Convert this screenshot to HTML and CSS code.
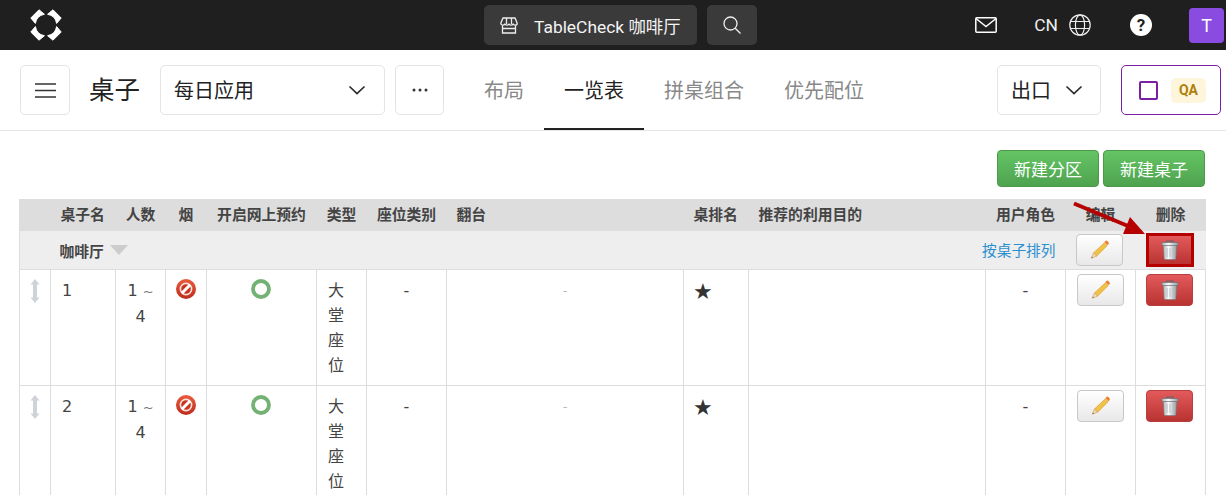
FILE: index.html
```html
<!DOCTYPE html>
<html lang="zh-CN">
<head>
  <meta charset="UTF-8">
  <title>桌子</title>
  <link rel="stylesheet" href="styles.css">
</head>
<body>
  <svg class="sprites" width="0" height="0">
    <defs>
      <linearGradient id="can" x1="0" x2="1" y1="0" y2="0">
        <stop offset="0" stop-color="#a9afb4"/>
        <stop offset="0.4" stop-color="#fbfcfc"/>
        <stop offset="1" stop-color="#8f979c"/>
      </linearGradient>
      <linearGradient id="noentry" x1="0" x2="0" y1="0" y2="1">
        <stop offset="0" stop-color="#ea5a3e"/>
        <stop offset="1" stop-color="#bb2e1c"/>
      </linearGradient>
      <symbol id="trash" viewBox="0 0 18 20">
        <path d="M6 2.500V1h6v1.500" fill="none" stroke="#5d666c" stroke-width="1.200"/>
        <rect x="0.800" y="2.500" width="16.400" height="3" rx="1" fill="url(#can)" stroke="#5d666c" stroke-width="0.600"/>
        <path d="M2.200 5.500h13.600l-0.900 13.200a1 1 0 0 1-1 .9H4.100a1 1 0 0 1-1-.9z" fill="url(#can)" stroke="#6a7278" stroke-width="0.500"/>
        <path d="M6 8v9M9 8v9M12 8v9" stroke="#b4babe" stroke-width="0.900"/>
      </symbol>
      <symbol id="pencil" viewBox="0 0 20 20">
        <path d="M14.500 3l3 3L6.500 17 3 13.800z" fill="#f0c248" stroke="#d69a2a" stroke-width="0.600"/>
        <path d="M15.500 1.200a1.700 1.700 0 0 1 2.400 0l.9.9a1.700 1.700 0 0 1 0 2.400l-1 1-3.300-3.300z" fill="#ef7f2c"/>
        <path d="M3 13.800L6.500 17 .8 19.200z" fill="#f3d9b4" stroke="#c9985f" stroke-width="0.600"/>
        <path d="M1.500 17.300L.8 19.200l1.900-.7z" fill="#8a6a48"/>
      </symbol>
      <symbol id="noway" viewBox="0 0 20 20">
        <circle cx="10" cy="10" r="10" fill="url(#noentry)"/>
        <circle cx="10" cy="10" r="5.600" fill="#c8341f" stroke="#fbe3dc" stroke-width="1.600"/>
        <path d="M5.800 14.200l8.400-8.400" stroke="#fff" stroke-width="3"/>
      </symbol>
      <symbol id="ring" viewBox="0 0 20 20">
        <circle cx="10" cy="10" r="8" fill="none" stroke="#74b174" stroke-width="3.800"/>
      </symbol>
      <symbol id="drag" viewBox="0 0 10 24">
        <path d="M5 0l4.500 5.500H7V18.500h2.500L5 24 .5 18.500H3V5.500H.5z" fill="#cfd3d8"/>
      </symbol>
      <symbol id="chevron" viewBox="0 0 18 10">
        <path d="M1.500 1.500L9 8.500l7.500-7" fill="none" stroke="#2a2a2a" stroke-width="1.700"/>
      </symbol>
    </defs>
  </svg>

  <header class="topbar">
    <svg class="logo" width="32" height="32" viewBox="0 0 32 32">
      <g fill="#fff" stroke="#fff" stroke-width="1" stroke-linejoin="round">
        <path id="petal" d="M9 .8L.8 9l4.600 5.400A11 11 0 0 1 14.400 5.300z"/>
        <use href="#petal" transform="matrix(-1 0 0 1 32 0)"/>
        <use href="#petal" transform="matrix(1 0 0 -1 0 32)"/>
        <use href="#petal" transform="matrix(-1 0 0 -1 32 32)"/>
      </g>
    </svg>
    <div class="top-center">
      <button class="dark-btn venue-btn">
        <svg width="18" height="17" viewBox="0 0 18 17" fill="none" stroke="#eee" stroke-width="1.300">
          <path d="M3 1h12l2.200 5.200a2 2 0 0 1-2 2 2.600 2.600 0 0 1-2.100-1.100 2.700 2.700 0 0 1-4.100 0 2.700 2.700 0 0 1-4.100 0A2.600 2.600 0 0 1 2.800 8.200a2 2 0 0 1-2-2z"/>
          <path d="M2.500 8.500V16h13V8.500M2.500 11.500h13M6.500 1v6M11.500 1v6"/>
        </svg>
        <span>TableCheck 咖啡厅</span>
      </button>
      <button class="dark-btn search-btn">
        <svg width="18" height="18" viewBox="0 0 18 18" fill="none" stroke="#eee" stroke-width="1.300">
          <circle cx="7.500" cy="7.500" r="6.500"/>
          <path d="M12.200 12.200L17.500 17.500"/>
        </svg>
      </button>
    </div>
    <div class="top-right">
      <svg class="mail" width="22" height="16" viewBox="0 0 22 16" fill="none" stroke="#fff" stroke-width="1.500">
        <rect x="0.800" y="0.800" width="20.400" height="14.400" rx="1"/>
        <path d="M1 1.500l10 8 10-8"/>
      </svg>
      <span class="lang">CN</span>
      <svg class="globe" width="22" height="22" viewBox="0 0 22 22" fill="none" stroke="#eee" stroke-width="1.200">
        <circle cx="11" cy="11" r="10.200"/>
        <ellipse cx="11" cy="11" rx="4.600" ry="10.200"/>
        <path d="M1.500 7.500h19M1.500 14.500h19"/>
      </svg>
      <span class="help">?</span>
      <span class="avatar">T</span>
    </div>
  </header>

  <nav class="subbar">
    <button class="box-btn menu-btn">
      <svg width="21" height="15" viewBox="0 0 21 15" stroke="#333" stroke-width="1.500"><path d="M0 1h21M0 7.500h21M0 14h21"/></svg>
    </button>
    <h1 class="page-title">桌子</h1>
    <button class="box-btn select-btn">
      <span>每日应用</span>
      <svg width="18" height="10"><use href="#chevron"/></svg>
    </button>
    <button class="box-btn more-btn">
      <svg width="16" height="4" viewBox="0 0 16 4" fill="#333"><circle cx="2" cy="2" r="1.500"/><circle cx="8" cy="2" r="1.500"/><circle cx="14" cy="2" r="1.500"/></svg>
    </button>
    <div class="tabs">
      <a class="tab">布局</a>
      <a class="tab active">一览表</a>
      <a class="tab">拼桌组合</a>
      <a class="tab">优先配位</a>
    </div>
    <button class="box-btn export-btn">
      <span>出口</span>
      <svg width="18" height="10"><use href="#chevron"/></svg>
    </button>
    <div class="qa-box">
      <span class="qa-check"></span>
      <span class="qa-badge">QA</span>
    </div>
  </nav>

  <main class="content">
    <div class="actions">
      <button class="green-btn">新建分区</button>
      <button class="green-btn">新建桌子</button>
    </div>

    <table class="tables">
      <colgroup>
        <col class="c-drag"><col class="c-name"><col class="c-pax"><col class="c-smoke">
        <col class="c-web"><col class="c-type"><col class="c-seat"><col class="c-turn">
        <col class="c-rank"><col class="c-purpose"><col class="c-role"><col class="c-edit"><col class="c-del">
      </colgroup>
      <thead>
        <tr class="head-row">
          <th></th>
          <th class="left">桌子名</th>
          <th>人数</th>
          <th>烟</th>
          <th>开启网上预约</th>
          <th>类型</th>
          <th>座位类别</th>
          <th class="left">翻台</th>
          <th class="left">桌排名</th>
          <th class="left">推荐的利用目的</th>
          <th>用户角色</th>
          <th>编辑</th>
          <th>删除</th>
        </tr>
        <tr class="section-row">
          <th></th>
          <th class="left" colspan="8"><span class="section-name">咖啡厅<i class="caret"></i></span></th>
          <th class="sort-cell" colspan="2"><a class="sort-link">按桌子排列</a></th>
          <th class="btn-cell"><button class="icon-btn edit-btn shifted"><svg width="20" height="19"><use href="#pencil"/></svg></button></th>
          <th class="btn-cell"><button class="icon-btn del-btn marked"><svg width="18" height="20"><use href="#trash"/></svg></button></th>
        </tr>
      </thead>
      <tbody>
        <tr>
          <td class="mid"><svg width="10" height="24"><use href="#drag"/></svg></td>
          <td class="left num">1</td>
          <td class="mid">1 <small>~</small> 4</td>
          <td class="mid icon-cell"><svg width="20" height="20"><use href="#noway"/></svg></td>
          <td class="mid icon-cell ring-cell"><svg width="20" height="20"><use href="#ring"/></svg></td>
          <td class="left num">大堂座位</td>
          <td class="mid dash">-</td>
          <td class="mid dash light">-</td>
          <td class="left star">★</td>
          <td></td>
          <td class="mid dash">-</td>
          <td class="btn-cell"><button class="icon-btn edit-btn"><svg width="20" height="19"><use href="#pencil"/></svg></button></td>
          <td class="btn-cell"><button class="icon-btn del-btn shifted"><svg width="18" height="20"><use href="#trash"/></svg></button></td>
        </tr>
        <tr>
          <td class="mid"><svg width="10" height="24"><use href="#drag"/></svg></td>
          <td class="left num">2</td>
          <td class="mid">1 <small>~</small> 4</td>
          <td class="mid icon-cell"><svg width="20" height="20"><use href="#noway"/></svg></td>
          <td class="mid icon-cell ring-cell"><svg width="20" height="20"><use href="#ring"/></svg></td>
          <td class="left num">大堂座位</td>
          <td class="mid dash">-</td>
          <td class="mid dash light">-</td>
          <td class="left star">★</td>
          <td></td>
          <td class="mid dash">-</td>
          <td class="btn-cell"><button class="icon-btn edit-btn"><svg width="20" height="19"><use href="#pencil"/></svg></button></td>
          <td class="btn-cell"><button class="icon-btn del-btn shifted"><svg width="18" height="20"><use href="#trash"/></svg></button></td>
        </tr>
      </tbody>
    </table>
  </main>

  <!-- annotation pointing at the delete button -->
  <svg class="arrow" width="80" height="40" viewBox="0 0 80 40">
    <path d="M4 3.500L58 26" stroke="#b60000" stroke-width="4"/>
    <path d="M75 34L60 17 53 34z" fill="#b60000"/>
  </svg>
</body>
</html>
```

FILE: styles.css
```css
html, body {
  height: 100%;
  overflow: hidden;
}
body {
  margin: 0;
  background: #fff;
  color: #333;
  font-family: Roboto, "Noto Sans CJK SC", sans-serif;
}
button {
  font-family: inherit;
  cursor: pointer;
}
.sprites {
  position: absolute;
}

/* top bar */
.topbar {
  display: grid;
  grid-template-columns: 484px 273px 1fr;
  align-items: center;
  height: 50px;
  background: #1f1f1f;
}
.logo {
  margin-left: 30px;
}
.top-center {
  display: flex;
  gap: 10px;
}
.dark-btn {
  display: flex;
  align-items: center;
  height: 40px;
  border: none;
  border-radius: 5px;
  background: #3a3a3a;
  color: #f4f4f4;
  font-size: 17.400px;
}
.venue-btn {
  gap: 16px;
  width: 213px;
  padding: 0 0 0 16px;
  white-space: nowrap;
}
.search-btn {
  justify-content: center;
  width: 50px;
  padding: 0;
}
.top-right {
  display: flex;
  align-items: center;
  justify-content: flex-end;
  padding-right: 2px;
  color: #eee;
}
.lang {
  margin-left: 37px;
  font-size: 17.400px;
}
.globe {
  margin-left: 11px;
}
.help {
  width: 22px;
  height: 22px;
  margin-left: 39px;
  border-radius: 50%;
  background: #fff;
  color: #1f1f1f;
  font-size: 17px;
  font-weight: 700;
  line-height: 22px;
  text-align: center;
}
.avatar {
  width: 35px;
  height: 35px;
  margin-left: 37px;
  border-radius: 4px;
  background: #8a4be0;
  color: #fff;
  font-size: 18px;
  line-height: 35px;
  text-align: center;
}

/* second bar */
.subbar {
  display: flex;
  height: 81px;
  padding: 15px 5px 0 20px;
  box-sizing: border-box;
  border-bottom: 1px solid #e6e6e6;
}
.box-btn {
  display: flex;
  align-items: center;
  justify-content: center;
  height: 50px;
  padding: 0;
  border: 1px solid #e4e4e4;
  border-radius: 5px;
  background: #fff;
  color: #222;
  font-size: 20px;
}
.box-btn span {
  margin-bottom: 2px;
}
.menu-btn {
  width: 50px;
}
.page-title {
  width: 50px;
  margin: 0 20px 0 19px;
  font-size: 25.500px;
  font-weight: 400;
  line-height: 50px;
  color: #222;
  white-space: nowrap;
}
.select-btn {
  justify-content: space-between;
  width: 225px;
  margin-left: 1px;
  padding: 0 18px 0 13px;
}
.more-btn {
  width: 49px;
  margin-left: 10px;
}
.tabs {
  display: flex;
  margin-left: 20px;
}
.tab {
  height: 65px;
  padding: 0 20px;
  box-sizing: border-box;
  color: #888;
  font-size: 20px;
  line-height: 52px;
}
.tab.active {
  border-bottom: 2px solid #222;
  color: #222;
}
.export-btn {
  gap: 14px;
  width: 104px;
  margin-left: auto;
  padding-right: 4px;
}
.qa-box {
  display: flex;
  align-items: center;
  gap: 13px;
  width: 100px;
  height: 50px;
  margin-left: 20px;
  padding-left: 17px;
  box-sizing: border-box;
  border: 1px solid #7b1fa2;
  border-radius: 5px;
}
.qa-check {
  width: 19px;
  height: 19px;
  box-sizing: border-box;
  border: 2px solid #7b1fa2;
  border-radius: 2px;
}
.qa-badge {
  width: 35px;
  height: 25px;
  border-radius: 5px;
  background: #fdf6dc;
  color: #b07f0a;
  font-size: 14px;
  font-weight: 700;
  line-height: 25px;
  text-align: center;
}

/* content */
.content {
  padding: 19px 21px 0 19px;
}
.actions {
  display: flex;
  justify-content: flex-end;
  gap: 4px;
  margin-bottom: 12px;
}
.green-btn {
  width: 102px;
  height: 37px;
  padding: 0;
  border: 1px solid #4b9a4b;
  border-radius: 4px;
  background: linear-gradient(#64c464, #4fa34f);
  color: #fff;
  font-size: 17px;
}
.tables {
  width: 1186px;
  table-layout: fixed;
  border-collapse: collapse;
  font-family: "DejaVu Sans", "Noto Sans CJK SC", sans-serif;
}
.c-drag { width: 31px; }
.c-name { width: 65px; }
.c-pax { width: 50px; }
.c-smoke { width: 41px; }
.c-web { width: 110px; }
.c-type { width: 50px; }
.c-seat { width: 80px; }
.c-turn { width: 237px; }
.c-rank { width: 65px; }
.c-purpose { width: 237px; }
.c-role { width: 80px; }
.c-edit { width: 70px; }
.c-del { width: 70px; }

.head-row th {
  height: 32px;
  padding: 0 0 3px;
  box-sizing: border-box;
  background: #ddd;
  color: #444;
  font-size: 14.800px;
  font-weight: 700;
  white-space: nowrap;
}
.head-row th:first-child,
.section-row th:first-child {
  border-left: 1px solid #ddd;
}
.section-row th {
  height: 38px;
  padding: 0;
  box-sizing: border-box;
  background: #eee;
  border-bottom: 1px solid #ddd;
}
.section-name {
  display: flex;
  align-items: center;
  margin-left: -1px;
  padding-top: 1px;
  color: #444;
  font-size: 14.800px;
}
.caret {
  width: 0;
  height: 0;
  margin-left: 6px;
  border-style: solid;
  border-width: 10px 9px 0;
  border-color: #ccc transparent transparent;
}
.tables th.sort-cell {
  padding-right: 10px;
  text-align: right;
}
.sort-link {
  color: #2a8fd0;
  font-size: 14.700px;
  font-weight: 400;
}
.tables th.left {
  padding-left: 10px;
  text-align: left;
}
.tables td {
  height: 116px;
  padding: 8px 10px 6px;
  box-sizing: border-box;
  border: 1px solid #ddd;
  border-top: 0;
  color: #444;
  font-size: 16px;
  line-height: 25px;
  vertical-align: top;
}
.tables td.left {
  padding-left: 9px;
  text-align: left;
}
.tables td.num {
  padding-left: 11px;
}
.tables td.mid {
  text-align: center;
}
.tables td:first-child {
  padding: 9px 0 0;
}
.tables td.icon-cell {
  padding: 9px 0 0;
}
.tables td.ring-cell {
  padding-right: 2px;
}
td svg {
  display: block;
  margin: 0 auto;
}
small {
  color: #777;
  font-size: 13px;
}
.dash {
  color: #888;
}
.tables td.light {
  color: #bbb;
  font-size: 13px;
}
.tables td.star {
  padding-top: 9px;
  color: #333;
  font-size: 22px;
}
.tables td.btn-cell {
  padding: 4px 0 0;
}
.btn-cell {
  text-align: center;
}
.icon-btn {
  display: inline-flex;
  align-items: center;
  justify-content: center;
  width: 47px;
  height: 32px;
  padding: 0;
  border-radius: 4px;
}
.icon-btn.shifted {
  margin-right: 2px;
}
.edit-btn {
  border: 1px solid #c8c8c8;
  background: linear-gradient(#fff, #e8e8e8);
}
.del-btn {
  border: 1px solid #b8403f;
  background: linear-gradient(#e45a5c, #b83331);
}
.del-btn.marked {
  width: 48px;
  height: 34px;
  margin-right: 2px;
  border: 3px solid #b50000;
  border-radius: 0;
}

/* annotation */
.arrow {
  position: absolute;
  top: 200px;
  left: 1070px;
}
```
